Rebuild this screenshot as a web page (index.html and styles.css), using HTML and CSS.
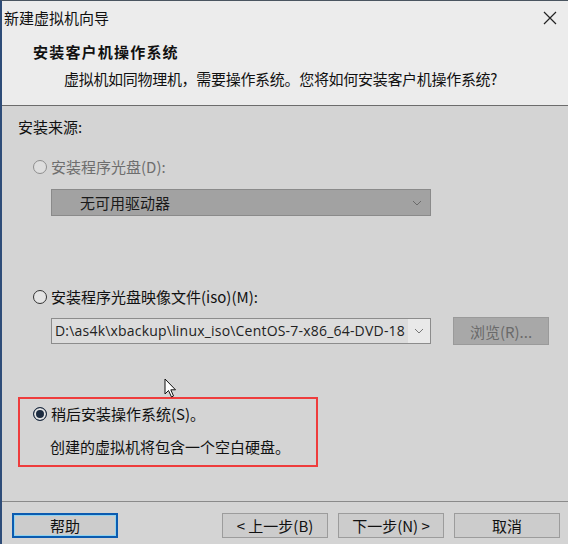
FILE: index.html
```html
<!DOCTYPE html>
<html>
<head>
    <meta charset="UTF-8">
    <meta name="viewport" content="width=device-width, initial-scale=1.0">
    <title>新建虚拟机向导</title>
    <link rel="stylesheet" href="styles.css">
</head>
<body>
    <div class="window">
        <div class="titlebar">
            <span class="title">新建虚拟机向导</span>
            <svg class="close" width="14" height="14" viewBox="0 0 14 14">
                <path d="M1 1 L13 13 M13 1 L1 13" stroke="#222" stroke-width="1.2" fill="none"/>
            </svg>
        </div>

        <div class="header">
            <div class="header-title">安装客户机操作系统</div>
            <div class="header-desc">虚拟机如同物理机，需要操作系统。您将如何安装客户机操作系统?</div>
        </div>

        <div class="content">
            <div class="section-label">安装来源:</div>

            <div class="option option-disabled">
                <div class="radio-row">
                    <span class="radio"></span>
                    <span>安装程序光盘(D):</span>
                </div>
                <div class="select select-disabled">
                    <span class="select-text">无可用驱动器</span>
                    <svg class="chevron" width="10" height="6" viewBox="0 0 10 6">
                        <path d="M1 1 L5 5 L9 1" stroke="#6a6a6a" stroke-width="1" fill="none"/>
                    </svg>
                </div>
            </div>

            <div class="option option-iso">
                <div class="radio-row">
                    <span class="radio"></span>
                    <span>安装程序光盘映像文件(iso)(M):</span>
                </div>
                <div class="field-row">
                    <div class="combo">
                        <span class="combo-text">D:\as4k\xbackup\linux_iso\CentOS-7-x86_64-DVD-18</span>
                        <svg class="chevron" width="10" height="6" viewBox="0 0 10 6">
                            <path d="M1 1 L5 5 L9 1" stroke="#777" stroke-width="1" fill="none"/>
                        </svg>
                    </div>
                    <button class="btn btn-disabled">浏览(R)...</button>
                </div>
            </div>

            <div class="option option-marked">
                <div class="radio-row">
                    <span class="radio radio-checked"></span>
                    <span>稍后安装操作系统(S)。</span>
                </div>
                <div class="option-note">创建的虚拟机将包含一个空白硬盘。</div>
            </div>

            <!-- mouse pointer -->
            <svg class="cursor" width="14" height="21" viewBox="0 0 14 21">
                <path d="M1 1 L1 16 L4.5 12.5 L7.5 19 L9.5 18 L6.8 11.8 L11.5 11.8 Z" fill="#fff" stroke="#111" stroke-width="1"/>
            </svg>
        </div>

        <div class="footer">
            <button class="btn btn-default">帮助</button>
            <div class="footer-nav">
                <button class="btn">&lt; 上一步(B)</button>
                <button class="btn">下一步(N) &gt;</button>
                <button class="btn">取消</button>
            </div>
        </div>
    </div>
</body>
</html>
```

FILE: styles.css
```css
/* 向导窗口 */
body {
    margin: 0;
    padding: 0;
    font-family: "Noto Sans CJK SC", "Noto Sans", sans-serif;
    font-size: 15px;
    color: #111;
    background-color: #d4d4d4;
}

.window {
    position: relative;
    width: 568px;
    height: 544px;
    display: flex;
    flex-direction: column;
    border-left: 2px solid #2e4c78;
    border-top: 1px solid #4a5560;
    box-sizing: border-box;
    overflow: hidden;
}

.titlebar {
    height: 33px;
    display: flex;
    align-items: center;
    justify-content: space-between;
    padding: 0 11px 0 2px;
    background-color: #ececec;
}

.title {
    line-height: 20px;
}

.header {
    height: 72px;
    box-sizing: border-box;
    padding: 6px 0 0 31px;
    background-color: #ececec;
    border-bottom: 1px solid #6c6c6c;
}

.header-title {
    font-weight: bold;
    line-height: 24px;
    letter-spacing: 1.2px;
}

.header-desc {
    margin-top: 4px;
    padding-left: 31px;
    line-height: 22px;
    letter-spacing: -0.3px;
}

.content {
    flex: 1;
    padding: 11px 0 0 16px;
    background-color: #d4d4d4;
}

.section-label {
    line-height: 20px;
}

.option {
    margin-left: 15px;
}

.option-disabled {
    margin-top: 20px;
    color: #6e6e6e;
}

.option-iso {
    margin-top: 71px;
}

.radio-row {
    display: flex;
    align-items: center;
    gap: 4px;
    line-height: 20px;
}

.radio {
    width: 12px;
    height: 12px;
    border: 1px solid #333;
    border-radius: 50%;
    background-color: #e4e4e4;
    box-sizing: content-box;
}

.option-disabled .radio {
    border-color: #8e8e8e;
    background-color: #dedede;
}

.radio-checked {
    background-color: #1c2b40;
    box-shadow: inset 0 0 0 2px #e4e4e4;
    border-color: #1c2b40;
}

.select {
    width: 380px;
    height: 27px;
    margin: 12px 0 0 18px;
    display: flex;
    align-items: center;
    justify-content: space-between;
    box-sizing: border-box;
    padding: 0 8px 0 28px;
    background-color: #a2a2a2;
    border: 1px solid #8a8a8a;
    color: #1a1a1a;
}

.field-row {
    margin-top: 10px;
    display: flex;
    align-items: center;
    gap: 22px;
    height: 28px;
}

.combo {
    width: 380px;
    height: 26px;
    margin-left: 18px;
    display: flex;
    align-items: center;
    box-sizing: border-box;
    border: 1px solid #8c8c8c;
    background-color: #e9e9e9;
}

.combo-text {
    width: 356px;
    height: 100%;
    padding-left: 3px;
    box-sizing: border-box;
    white-space: nowrap;
    line-height: 24px;
    font-size: 14px;
    font-family: "Open Sans", "Noto Sans", sans-serif;
    letter-spacing: 0.2px;
    background-color: #dcdcdc;
    color: #222;
}

.combo .chevron {
    margin-left: 6px;
}

.option-marked {
    margin-top: 52px;
    margin-left: 0;
    width: 300px;
    height: 70px;
    box-sizing: border-box;
    padding: 5px 0 0 13px;
    border: 2px solid #ee3c3c;
}

.option-note {
    margin-top: 13px;
    padding-left: 17px;
    line-height: 20px;
}

.cursor {
    position: absolute;
    left: 162px;
    top: 377px;
}

.footer {
    height: 43px;
    box-sizing: border-box;
    padding: 11px 8px 0 10px;
    display: flex;
    justify-content: space-between;
    align-items: flex-start;
    border-top: 1px solid #8a8a8a;
    background-color: #d4d4d4;
}

.footer-nav {
    display: flex;
    gap: 10px;
}

.btn {
    width: 106px;
    height: 25px;
    padding: 0;
    font-family: "Noto Sans CJK SC", "Noto Sans", sans-serif;
    font-size: 15px;
    color: #111;
    background-color: #cccccc;
    border: 1px solid #9c9c9c;
    cursor: pointer;
}

.btn-default {
    border: 2px solid #0b5bb0;
    box-shadow: inset 0 0 0 1px #8fd3f0;
}

.btn-disabled {
    width: 96px;
    height: 28px;
    background-color: #a8a8a8;
    border-color: #9a9a9a;
    color: #6a6a6a;
}
```
